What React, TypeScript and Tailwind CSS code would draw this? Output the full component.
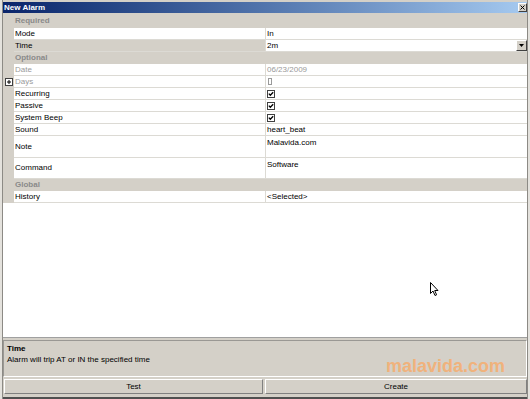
import React from "react";

const font = { fontFamily: '"Liberation Sans", Arial, sans-serif' };

function Check() {
  return (
    <svg width="8" height="8" viewBox="0 0 8 8" className="block">
      <rect x="0.5" y="0.5" width="7" height="7" fill="#fff" stroke="#404040" strokeWidth="1" />
      <path d="M1.8 3.6 L3.3 5.2 L6.2 2.2" fill="none" stroke="#000" strokeWidth="1.3" />
    </svg>
  );
}

function Plus() {
  return (
    <svg width="8" height="8" viewBox="0 0 8 8" className="block">
      <rect x="0.5" y="0.5" width="7" height="7" fill="#fff" stroke="#404040" strokeWidth="1" />
      <path d="M2 4 H6 M4 2 V6" stroke="#000" strokeWidth="1" />
    </svg>
  );
}

function Category({ label, tall }: { label: string; tall?: boolean }) {
  return (
    <div
      className={`flex items-center bg-[#d4d0c8] pl-[12px] text-[8px] font-bold text-[#8a8a8a] shrink-0 ${
        tall ? "h-[14px]" : "h-[12px]"
      }`}
    >
      {label}
    </div>
  );
}

function Row({
  label,
  value,
  h = "h-[12px]",
  gray,
  selected,
  plus,
  top,
}: {
  label: string;
  value?: React.ReactNode;
  h?: string;
  gray?: boolean;
  selected?: boolean;
  plus?: boolean;
  top?: boolean;
}) {
  return (
    <div className={`flex shrink-0 ${h}`}>
      <div className="w-[11px] shrink-0 bg-[#d4d0c8] flex items-center justify-center">{plus ? <Plus /> : null}</div>
      <div
        className={`w-[252px] shrink-0 flex items-center pl-[1px] border-b border-r border-[#dcdad4] text-[8px] ${
          selected ? "bg-[#d4d0c8]" : "bg-white"
        } ${gray ? "text-[#9a9a9a]" : "text-black"}`}
      >
        {label}
      </div>
      <div
        className={`flex-1 flex pl-[1px] border-b border-[#dcdad4] bg-white text-[8px] ${
          top ? "items-start pt-[1px]" : "items-center"
        } ${gray ? "text-[#9a9a9a]" : "text-black"}`}
      >
        {value}
      </div>
    </div>
  );
}

export default function App() {
  return (
    <div
      className="w-[530px] h-[399px] bg-[#d4d0c8] relative overflow-hidden flex flex-col border-l-[2px] border-r-[2px] border-[#e4e2dd]"
      style={font}
    >
      <div className="flex-1 flex flex-col border-l border-r border-[#8c8a85] pt-[2px]">
        {/* Title bar */}
        <div className="h-[11px] shrink-0 flex items-center justify-between bg-gradient-to-r from-[#0a246a] to-[#a6caf0]">
          <span className="pl-[1px] text-[8px] font-bold text-white leading-none">New Alarm</span>
          <div className="w-[9px] h-[9px] mr-[0px] bg-[#d4d0c8] border-t border-l border-white border-r border-b border-r-[#404040] border-b-[#404040] flex items-center justify-center">
            <svg width="5" height="5" viewBox="0 0 5 5" className="block">
              <path d="M0.5 0.5 L4.5 4.5 M4.5 0.5 L0.5 4.5" stroke="#000" strokeWidth="1" />
            </svg>
          </div>
        </div>

        {/* Property grid */}
        <div className="mt-[1px] h-[324px] shrink-0 bg-white flex flex-col border-b border-[#a0a0a0]">
          <Category label="Required" tall />
          <Row label="Mode" value="In" />
          <Row
            label="Time"
            selected
            value={
              <div className="flex-1 flex items-center justify-between h-full">
                <span>2m</span>
                <div className="w-[11px] h-[11px] bg-[#d4d0c8] border-t border-l border-white border-r border-b border-r-[#404040] border-b-[#404040] flex items-center justify-center">
                  <svg width="5" height="3" viewBox="0 0 5 3" className="block">
                    <path d="M0 0 H5 L2.5 3 Z" fill="#000" />
                  </svg>
                </div>
              </div>
            }
          />
          <Category label="Optional" />
          <Row label="Date" gray value="06/23/2009" />
          <Row
            label="Days"
            gray
            plus
            value={<div className="ml-[1px] w-[4px] h-[7px] border border-[#9a9a9a]" />}
          />
          <Row label="Recurring" value={<Check />} />
          <Row label="Passive" value={<Check />} />
          <Row label="System Beep" value={<Check />} />
          <Row label="Sound" value="heart_beat" />
          <Row label="Note" h="h-[22px]" top value={<span className="leading-[12px]">Malavida.com</span>} />
          <Row label="Command" h="h-[21px]" top value={<span className="leading-[12px]">Software</span>} />
          <Category label="Global" />
          <Row label="History" value="<Selected>" />
        </div>

        {/* Description panel */}
        <div className="mt-[2px] h-[37px] shrink-0 border border-[#9a9894] border-r-white border-b-white flex flex-col pl-[3px] pt-[3px]">
          <div className="text-[8px] font-bold text-black leading-[10px]">Time</div>
          <div className="text-[8px] text-black leading-[12px]">Alarm will trip AT or IN the specified time</div>
        </div>

        {/* Buttons */}
        <div className="mt-[2px] h-[15px] shrink-0 flex gap-[2px] pl-[1px]">
          <div className="w-[259px] h-full flex items-center justify-center text-[8px] text-black border-t border-l border-white border-r border-b border-r-[#808080] border-b-[#808080]">
            Test
          </div>
          <div className="flex-1 h-full flex items-center justify-center text-[8px] text-black border-t border-l border-white border-r border-b border-r-[#808080] border-b-[#808080]">
            Create
          </div>
        </div>
        <div className="flex-1 border-b-[2px] border-[#505050]" />
      </div>

      {/* watermark */}
      <div className="absolute left-[384px] top-[357px] text-[18px] font-bold text-[#f0b27c] leading-none tracking-[0px]">
        malavida.com
      </div>

      {/* mouse cursor */}
      <svg className="absolute left-[428px] top-[282px]" width="10" height="15" viewBox="0 0 10 15">
        <path d="M0.5 0.5 L0.5 11.5 L3 9 L5 13.5 L6.6 12.8 L4.7 8.5 L8 8.5 Z" fill="#fff" stroke="#000" strokeWidth="1" strokeLinejoin="miter" />
      </svg>
    </div>
  );
}
